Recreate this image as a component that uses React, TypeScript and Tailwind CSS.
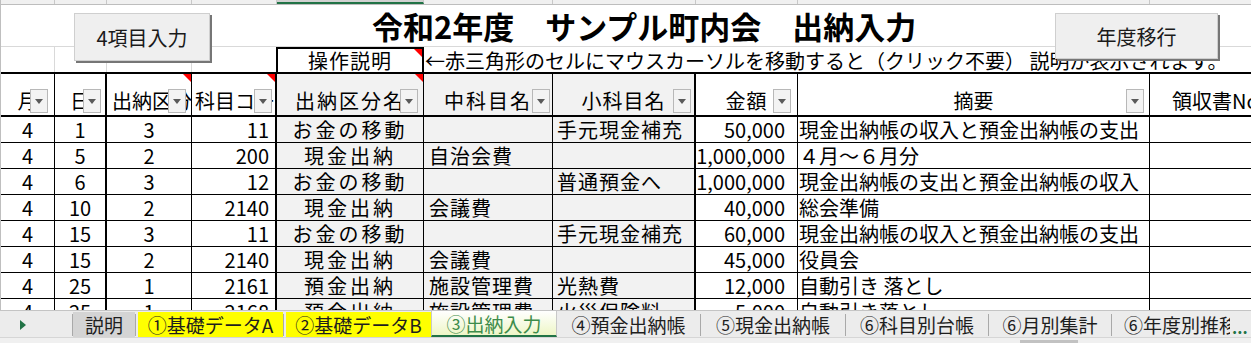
import React from 'react';

type Col = { w: string; b: string; bg?: string };

// column widths follow the sheet's grid lines
const cols: Col[] = [
  { w: 'w-[54px]', b: 'border-r' },
  { w: 'w-[52px]', b: 'border-r-2' },
  { w: 'w-[85px]', b: 'border-r' },
  { w: 'w-[85px]', b: 'border-r-2' },
  { w: 'w-[147px]', b: 'border-r', bg: 'bg-[#f2f2f2]' },
  { w: 'w-[129px]', b: 'border-r', bg: 'bg-[#f2f2f2]' },
  { w: 'w-[143px]', b: 'border-r-2', bg: 'bg-[#f2f2f2]' },
  { w: 'w-[102px]', b: 'border-r' },
  { w: 'w-[352px]', b: 'border-r' },
  { w: 'w-[160px]', b: '' },
];

const cellAlign = [
  'justify-center',
  'justify-center',
  'justify-center',
  'justify-end pr-[6px]',
  'justify-center tracking-[3px]',
  'justify-start pl-[5px] tracking-[1px]',
  'justify-start pl-[4px] tracking-[1px]',
  'justify-end pr-[12px]',
  'justify-start pl-[1px]',
  'justify-start',
];

const headers = [
  { label: '月', cls: 'justify-center', fb: 'right-[6px]' },
  { label: '日', cls: 'justify-center', fb: 'right-[4px]' },
  { label: '出納区分', cls: 'justify-start pl-[5px] text-[18px]', fb: 'right-[5px]', red: true },
  { label: '科目コード', cls: 'justify-start pl-[3px] text-[18px]', fb: 'right-[3px]', red: true },
  { label: '出納区分名', cls: 'justify-center tracking-[2px]', fb: 'right-[5px]', red: true },
  { label: '中科目名', cls: 'justify-center tracking-[2px]', fb: 'right-[2px]' },
  { label: '小科目名', cls: 'justify-center tracking-[1px]', fb: 'right-[3px]' },
  { label: '金額', cls: 'justify-center tracking-[1px]', fb: 'right-[6px]' },
  { label: '摘要', cls: 'justify-center', fb: 'right-[5px]' },
  { label: '領収書No', cls: 'justify-start pl-[22px]' },
];

const rows = [
  ['4', '1', '3', '11', 'お金の移動', '', '手元現金補充', '50,000', '現金出納帳の収入と預金出納帳の支出', ''],
  ['4', '5', '2', '200', '現金出納', '自治会費', '', '1,000,000', '４月～６月分', ''],
  ['4', '6', '3', '12', 'お金の移動', '', '普通預金へ', '1,000,000', '現金出納帳の支出と預金出納帳の収入', ''],
  ['4', '10', '2', '2140', '現金出納', '会議費', '', '40,000', '総会準備', ''],
  ['4', '15', '3', '11', 'お金の移動', '', '手元現金補充', '60,000', '現金出納帳の収入と預金出納帳の支出', ''],
  ['4', '15', '2', '2140', '現金出納', '会議費', '', '45,000', '役員会', ''],
  ['4', '25', '1', '2161', '預金出納', '施設管理費', '光熱費', '12,000', '自動引き 落とし', ''],
  ['4', '25', '1', '2168', '預金出納', '施設管理費', '火災保険料', '5,000', '自動引き落とし', ''],
];

const RedMark = () => (
  <span className="absolute top-0 right-0 w-0 h-0 border-l-[8px] border-l-transparent border-t-[8px] border-t-[#ff0000]" />
);

const FilterButton = ({ pos }: { pos: string }) => (
  <span className={`absolute bottom-[2px] ${pos} w-[18px] h-[24px] bg-[#f3f3f3] border border-[#b8b8b8] flex items-center justify-center`}>
    <svg width="8" height="5" viewBox="0 0 8 5">
      <path d="M0 0 H8 L4 5 Z" fill="#5a5a5a" />
    </svg>
  </span>
);

const SheetButton = ({ label, pos }: { label: string; pos: string }) => (
  <div
    className={`absolute ${pos} flex items-center justify-center pt-[2px] bg-[#efefef] border border-[#cfcfcf] shadow-[2px_2px_0_#767676] text-[20px] leading-none text-[#1a1a1a]`}
  >
    {label}
  </div>
);

type Tab = { label: string; w: string; cls?: string; active?: boolean };

const tabs: Tab[] = [
  { label: '説明', w: 'w-[62px]', cls: 'bg-[#d4d4d4]' },
  { label: '①基礎データA', w: 'w-[145px] ml-[2px]', cls: 'bg-[#ffff00]' },
  { label: '②基礎データB', w: 'w-[145px] ml-[2px]', cls: 'bg-[#ffff00]' },
  { label: '③出納入力', w: 'w-[126px]', active: true },
  { label: '④預金出納帳', w: 'w-[143px]' },
  { label: '⑤現金出納帳', w: 'w-[144px]' },
  { label: '⑥科目別台帳', w: 'w-[142px]' },
  { label: '⑥月別集計', w: 'w-[122px]' },
  { label: '⑥年度別推移', w: 'w-[118px] justify-start pl-[12px]' },
];

const Sep = () => <span className="w-px h-[22px] self-center bg-[#a9a9a9] shrink-0" />;

function TabBar() {
  return (
    <div className="h-[33px] flex flex-col bg-[#ececec] border-t border-[#c4c4c4]">
      <div className="h-[26px] flex items-stretch pt-[1px]">
        <div className="w-[72px] shrink-0 flex items-center pl-[20px]">
          <svg width="6" height="10" viewBox="0 0 6 10">
            <path d="M0 0 L6 5 L0 10 Z" fill="#217346" />
          </svg>
        </div>
        {tabs.map((t, i) => {
          const prevActive = i > 0 && tabs[i - 1].active;
          return (
            <React.Fragment key={t.label}>
              {!t.active && !prevActive && <Sep />}
              {t.active ? (
                <div
                  className={`${t.w} shrink-0 -mt-[1px] flex items-center justify-center bg-gradient-to-b from-white to-[#eef6c6] border-x border-[#c8c8c8] border-b-2 border-b-[#217346] text-[19px] leading-none text-[#3d8c4a] whitespace-nowrap`}
                >
                  {t.label}
                </div>
              ) : (
                <div
                  className={`flex items-center justify-center ${t.w} ${t.cls ?? ''} shrink-0 overflow-hidden text-[19px] leading-none text-[#1e1e1e] whitespace-nowrap`}
                >
                  {t.label}
                </div>
              )}
            </React.Fragment>
          );
        })}
        <div className="shrink-0 pl-[2px] flex items-end pb-[2px] text-[16px] font-bold leading-none text-[#217346]">...</div>
      </div>
      <div className="flex-1 border-t border-[#d6d6d6] bg-[#f0f0f0] relative">
        <span className="absolute left-[1020px] top-[2px] w-[58px] h-[3px] bg-[#c2c2c2]" />
      </div>
    </div>
  );
}

export default function App() {
  return (
    <div className="w-[1251px] h-[343px] overflow-hidden bg-white font-['Noto_Sans_CJK_JP',sans-serif] text-black">
      <div className="relative h-[310px] overflow-hidden border-l border-[#bfbfbf]">
        {/* column header residue */}
        <div className="flex h-[5px] border-b border-[#bdbdbd] bg-[#f0f0f0]">
          {cols.map((c, i) => (
            <div
              key={i}
              className={`${c.w} shrink-0 h-full border-r border-[#c8c8c8] ${i === 4 ? 'bg-[#d2d2d2] border-b-2 border-b-[#217346]' : ''}`}
            />
          ))}
        </div>

        {/* title */}
        <div className="h-[42px] border-b border-[#d9d9d9] flex items-center pl-[371px]">
          <span className="text-[31px] font-bold leading-none whitespace-nowrap">令和2年度　サンプル町内会　出納入力</span>
        </div>

        {/* operation note */}
        <div className="flex h-[25px]">
          <div className="w-[54px] shrink-0 border-r border-[#d9d9d9]" />
          <div className="w-[52px] shrink-0 border-r border-[#d9d9d9]" />
          <div className="w-[85px] shrink-0 border-r border-[#d9d9d9]" />
          <div className="w-[84px] shrink-0" />
          <div className="relative w-[148px] shrink-0 border-x-2 border-t-2 border-black flex items-end justify-center pb-[1px] tracking-[1px] text-[20px] leading-none">
            操作説明
            <RedMark />
          </div>
          <div className="flex items-end pb-[1px] pl-[1px] text-[20px] leading-none whitespace-nowrap">
            ←赤三角形のセルにマウスカーソルを移動すると（クリック不要） 説明が表示されます。
          </div>
        </div>

        {/* header row */}
        <div className="flex h-[45px] border-y-2 border-black">
          {headers.map((h, i) => (
            <div
              key={h.label}
              className={`${cols[i].w} ${cols[i].b} ${cols[i].bg ?? ''} border-black shrink-0 relative overflow-hidden flex items-end pb-[4px] text-[20px] leading-none whitespace-nowrap ${h.cls}`}
            >
              {h.label}
              {h.fb && <FilterButton pos={h.fb} />}
              {h.red && <RedMark />}
            </div>
          ))}
        </div>

        {/* data rows */}
        {rows.map((r, ri) => (
          <div key={ri} className="flex h-[26px] border-b border-black">
            {r.map((v, ci) => (
              <div
                key={ci}
                className={`${cols[ci].w} ${cols[ci].b} ${cols[ci].bg ?? ''} border-black shrink-0 overflow-hidden flex items-center text-[20px] leading-none whitespace-nowrap ${cellAlign[ci]}`}
              >
                {v}
              </div>
            ))}
          </div>
        ))}

        <SheetButton label="4項目入力" pos="left-[73px] top-[13px] w-[136px] h-[48px]" />
        <SheetButton label="年度移行" pos="left-[1054px] top-[13px] w-[163px] h-[46px]" />
      </div>
      <TabBar />
    </div>
  );
}
